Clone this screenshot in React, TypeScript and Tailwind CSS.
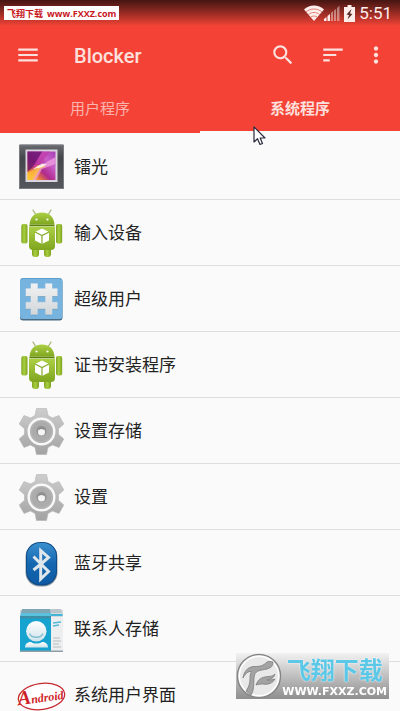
import React from 'react';
import { MdMenu, MdMoreVert, MdSearch, MdSort } from 'react-icons/md';

const GalleryIcon: React.FC = () => (
  <svg viewBox="0 0 48 48" className="w-12 h-12">
    <defs>
      <linearGradient id="frame" x1="0" y1="0" x2="0" y2="1">
        <stop offset="0" stopColor="#6b6c72" />
        <stop offset="0.3" stopColor="#44464c" />
        <stop offset="1" stopColor="#55575c" />
      </linearGradient>
      <linearGradient id="photo" x1="0" y1="1" x2="1" y2="0">
        <stop offset="0" stopColor="#ffd21f" />
        <stop offset="0.2" stopColor="#f58a2c" />
        <stop offset="0.42" stopColor="#b02a8c" />
        <stop offset="0.7" stopColor="#c95fcb" />
        <stop offset="1" stopColor="#a63fb5" />
      </linearGradient>
    </defs>
    <rect x="1" y="1.5" width="45" height="44.5" rx="1" fill="url(#frame)" />
    <rect x="1.5" y="2" width="44" height="43.5" rx="1" fill="none" stroke="#85868b" strokeWidth="0.8" />
    <rect x="7.5" y="6.5" width="32" height="32.5" fill="#d9d4de" />
    <rect x="9.5" y="8.5" width="28" height="28.5" fill="url(#photo)" />
    <path d="M9.5 8.5h15L14 25l-4.5 4z" fill="#6a1570" opacity="0.85" />
    <path d="M37.5 14 20 24l-7 13h5l6-11 13.5-5z" fill="#f3a6e4" opacity="0.7" />
    <path d="M24 8.5h8L20 24l-8 6z" fill="#c13aa8" opacity="0.7" />
    <path d="M9.5 31 20 22l8 1-6 3-7 11H9.5z" fill="#ffc53a" opacity="0.75" />
    <path d="M15 26 24 20.5l5 1-6 3z" fill="#fff" opacity="0.8" />
  </svg>
);

const AndroidIcon: React.FC = () => (
  <svg viewBox="0 0 48 48" className="w-12 h-12">
    <defs>
      <linearGradient id="droid" x1="0" y1="0" x2="0" y2="1">
        <stop offset="0" stopColor="#acd045" />
        <stop offset="1" stopColor="#7fa51f" />
      </linearGradient>
      <linearGradient id="droidSide" x1="0" y1="0" x2="1" y2="0">
        <stop offset="0" stopColor="#7da321" />
        <stop offset="0.45" stopColor="#a9cf3f" />
        <stop offset="1" stopColor="#7da321" />
      </linearGradient>
    </defs>
    <path d="M15 1l3 5M33 1l-3 5" stroke="#a3b87a" strokeWidth="1.3" strokeLinecap="round" />
    <rect x="14" y="34" width="7" height="14" rx="3" fill="url(#droidSide)" />
    <rect x="26" y="34" width="7" height="14" rx="3" fill="url(#droidSide)" />
    <rect x="3.3" y="15" width="6.2" height="19.5" rx="2" fill="url(#droidSide)" />
    <rect x="38" y="15" width="6.2" height="19.5" rx="2" fill="url(#droidSide)" />
    <path d="M11 17.500h26V37a4 4 0 0 1-4 4H15a4 4 0 0 1-4-4z" fill="url(#droid)" />
    <path d="M11.500 15.800C12 7.500 17 3.500 24 3.500s12 4 12.500 12.300z" fill="url(#droid)" />
    <path d="M11.500 16.500h25" stroke="#5d7d15" strokeWidth="1.3" />
    <circle cx="18.5" cy="10.5" r="1.1" fill="#fff" />
    <circle cx="29.5" cy="10.5" r="1.1" fill="#fff" />
    <path d="M24 19.500l7 3.500v8.500l-7 3.500-7-3.500V23z" fill="#fff" />
    <path d="M17 23l7 3.500 7-3.500M24 26.500V35" fill="none" stroke="#86ab28" strokeWidth="1.2" />
  </svg>
);

const hashPath =
  'M13 8.700h6.500v5h8v-5H34v5h5.300V21H34v6.300h5.300v6.500H34v5.700h-6.500v-5.700h-8v5.700H13v-5.700H8v-6.500h5V21H8v-7.300h5zM19.500 21v6.300h8V21z';

const SuperuserIcon: React.FC = () => (
  <svg viewBox="0 0 48 48" className="w-12 h-12">
    <defs>
      <linearGradient id="hash" x1="0" y1="0" x2="0" y2="1">
        <stop offset="0" stopColor="#f0f1f2" />
        <stop offset="1" stopColor="#d3d7da" />
      </linearGradient>
    </defs>
    <rect x="2" y="4" width="42.5" height="41.5" rx="3" fill="#4a6a80" />
    <rect x="2" y="3" width="42.5" height="41" rx="3" fill="#76b3df" />
    <path d="M3 5a2 2 0 0 1 2-1.500h36.500a2 2 0 0 1 2 1.500" fill="none" stroke="#5d9fce" />
    <path d={hashPath} fill="#5c8eb2" fillRule="evenodd" transform="translate(0 0.800)" />
    <path
      d={hashPath}
      fill="url(#hash)"
      fillRule="evenodd"
      stroke="url(#hash)"
      strokeWidth="0.5"
      strokeLinejoin="round"
    />
  </svg>
);

const GearIcon: React.FC = () => (
  <svg viewBox="0 0 48 48" className="w-12 h-12">
    <defs>
      <linearGradient id="gear" x1="0" y1="0" x2="0" y2="1">
        <stop offset="0" stopColor="#cdcdcd" />
        <stop offset="1" stopColor="#a3a3a3" />
      </linearGradient>
    </defs>
    <path
      d="M18.500 1.500h10l1.500 7 4.500 2.500 6.500-2.500 4.800 8.500-5.300 4.700v5.600l5.300 4.700-4.800 8.500-6.500-2.500-4.500 2.500-1.500 7h-10l-1.500-7-4.500-2.500L6 40.500 1.200 32l5.300-4.700v-5.600L1.200 17 6 8.500l6.500 2.500L17 8.500z"
      fill="url(#gear)"
      stroke="#b4b4b4"
      strokeWidth="0.6"
      strokeLinejoin="round"
    />
    <circle cx="23.5" cy="24.5" r="12.8" fill="#b4b4b4" stroke="#f8f8f8" strokeWidth="2.4" />
    <circle cx="23.5" cy="24.5" r="10" fill="#acacac" />
    <circle cx="23.5" cy="24" r="5.2" fill="#949494" />
    <circle cx="23.5" cy="25" r="3.5" fill="#f5f5f5" />
    <path d="M21 22.500c1-1.500 4-1.500 5 0" fill="none" stroke="#888" strokeWidth="1.2" />
  </svg>
);

const BluetoothIcon: React.FC = () => (
  <svg viewBox="0 0 48 48" className="w-12 h-12">
    <defs>
      <linearGradient id="bt" x1="0" y1="0" x2="0" y2="1">
        <stop offset="0" stopColor="#3a8fce" />
        <stop offset="0.5" stopColor="#1567b0" />
        <stop offset="1" stopColor="#0d5ba4" />
      </linearGradient>
    </defs>
    <rect x="7.5" y="4" width="32" height="43.5" rx="14" fill="#8d99a3" />
    <rect x="8" y="3" width="31" height="43.5" rx="14" fill="#0f4d88" />
    <rect x="9" y="4" width="29" height="41" rx="13" fill="url(#bt)" />
    <path
      d="M15.500 17.500 23 25l7.500 7.500-7.800 7.500V11.500l7.800 7L23 25l-7.500 6"
      fill="none"
      stroke="#dfe6ec"
      strokeWidth="3"
    />
  </svg>
);

const ContactsIcon: React.FC = () => (
  <svg viewBox="0 0 48 48" className="w-12 h-12">
    <defs>
      <linearGradient id="person" x1="0" y1="0" x2="0" y2="1">
        <stop offset="0" stopColor="#ffffff" />
        <stop offset="1" stopColor="#cfe3ea" />
      </linearGradient>
    </defs>
    <rect x="2" y="5" width="43" height="42" fill="#d5dadc" />
    <path d="M4 4h28.500v4H3z" fill="#7fa6b4" />
    <path d="M3 8h30v3H2z" fill="#5bc0dd" />
    <path d="M2 11h31v3H2z" fill="#3e8ea8" />
    <path d="M33 4h10l1 4H33z" fill="#b9c7cc" />
    <path d="M33 9h11.500v2H33z" fill="#42b5d8" />
    <path d="M33 12h12v34.500H33z" fill="#eceeef" />
    <path d="M2 13.500h31V47H2z" fill="#17a3cf" />
    <path d="M2 45.500h43V47H2z" fill="#8da0a7" />
    <circle cx="18.3" cy="26.3" r="10.2" fill="url(#person)" />
    <path d="M11.500 28.500c2 5 11.500 5 13.500 0" fill="none" stroke="#83bfd3" strokeWidth="1.4" />
    <path d="M7 42.500c0-4 3-5.500 6-5.500 3 2 8 2 11 0 3 0 6 1.500 6 5.500z" fill="url(#person)" />
    <path d="M35 18l8-1M35 21l6-1" stroke="#55b8d8" strokeWidth="1.5" />
    <path d="M35 33h7M35 36h8M35 39h6M35 42h8" stroke="#b9bec0" strokeWidth="1.2" />
  </svg>
);

const KitKatIcon: React.FC = () => (
  <svg viewBox="0 0 48 48" className="w-12 h-12 overflow-visible">
    <g transform="rotate(-8 23.500 25.500)">
      <ellipse cx="23.5" cy="25.5" rx="23.3" ry="13" fill="#fff" stroke="#c62a30" strokeWidth="1.3" />
      <text
        x="22.5"
        y="31"
        textAnchor="middle"
        fill="#cf1f26"
        className="font-['Liberation_Serif',serif] font-bold italic text-[12px]"
      >
        <tspan className="text-[20px]">A</tspan>ndroid
      </text>
    </g>
  </svg>
);

const apps = [
  { name: '镭光', Icon: GalleryIcon },
  { name: '输入设备', Icon: AndroidIcon },
  { name: '超级用户', Icon: SuperuserIcon },
  { name: '证书安装程序', Icon: AndroidIcon },
  { name: '设置存储', Icon: GearIcon },
  { name: '设置', Icon: GearIcon },
  { name: '蓝牙共享', Icon: BluetoothIcon },
  { name: '联系人存储', Icon: ContactsIcon },
  { name: '系统用户界面', Icon: KitKatIcon },
];

const StatusBar: React.FC = () => (
  <div className="flex h-[26px] items-center justify-between bg-gradient-to-b from-[#451512] to-[#f44336] pl-1 pr-2">
    <div className="flex h-[14px] items-center gap-1 bg-white px-[3px] font-['Open_Sans','Noto_Sans_CJK_SC',sans-serif] text-[9px] font-bold leading-none text-[#c8161d]">
      <span>飞翔下载</span>
      <span>www.FXXZ.com</span>
    </div>
    <div className="flex items-center text-[#fdeeec]">
      <svg viewBox="0 0 20 16" className="h-4 w-5" fill="currentColor">
        <path d="M10 16 0 4.500C5.500-.8 14.500-.8 20 4.500z" />
        <path
          d="M2 7c4.500-4 11.500-4 16 0M4.300 9.600c3.200-2.800 8.200-2.800 11.400 0M6.600 12.200c2-1.600 4.800-1.600 6.800 0"
          fill="none"
          stroke="#e0655b"
          strokeWidth="0.8"
        />
      </svg>
      <svg viewBox="0 0 16 16" className="h-4 w-4" fill="currentColor">
        <path d="M0 16v-2l2.500-2v4zM3.500 16v-5l2.500-2v7z" />
        <path d="M7 16V8l2-2v10zM10 16V5.500L12 4v12zM13 16V3l2.500-2.500V16z" opacity="0.45" />
      </svg>
      <svg viewBox="0 0 11 17" className="ml-1 h-[17px] w-[11px]">
        <path d="M3.500 0h4v2H11v15H0V2h3.500z" fill="#fdeeec" />
        <path d="M7.500 4 2.500 9.500l2.500.5-1.500 4.500L8.500 9 6 8.500z" fill="#5f2b26" />
      </svg>
      <span className="ml-1 font-['Roboto',sans-serif] text-[17px] leading-none">5:51</span>
    </div>
  </div>
);

const Watermark: React.FC = () => (
  <div className="fixed bottom-3 right-[11px] flex h-[46px] items-center bg-gradient-to-b from-[#f2f2f2] to-[#8f8f8f] pr-[2px]">
    <svg viewBox="0 0 46 46" className="h-[46px] w-[46px]">
      <circle cx="23" cy="23" r="21.5" fill="#e9e9e9" stroke="#868686" strokeWidth="1.5" />
      <circle cx="23" cy="23" r="19.7" fill="none" stroke="#fff" strokeWidth="1.5" />
      {/* Upper wing */}
      <path
        d="M7 25c1-7 5-11 11-11.500 6 0 9-.5 13-4.500 2-1 4-.5 6 0 0 4-2 6-6 7-6 1.500-11 1-12.500 6C17 28 19 36 15 42l-5-4c3-4 4-8 4-12 0-3 0-5 1.500-7.500C12 18 9 21 7 25z"
        fill="#a3a3a3"
        stroke="#7b7b7b"
        strokeWidth="0.8"
      />
      {/* Lower wing */}
      <path
        d="M39 21c-3 3-6 2-10 3-5 1-7 3-9 8 3-1 5-1 7-1 5 1 10-1 12-5-3 1-5 1-8 1 4-1 7-2 8-6z"
        fill="#a3a3a3"
        stroke="#7b7b7b"
        strokeWidth="0.8"
      />
    </svg>
    <div className="flex flex-col items-center font-bold">
      <span className="font-['Noto_Sans_CJK_SC',sans-serif] text-[24px] leading-[30px] text-[#5cc8e8] [text-shadow:0_0_2px_#fff]">
        飞翔下载
      </span>
      <span className="pt-px font-['DejaVu_Sans',sans-serif] text-[11px] leading-[14px] text-white">WWW.FXXZ.COM</span>
    </div>
  </div>
);

const App: React.FC = () => {
  return (
    <div className="relative h-screen overflow-hidden bg-[#fafafa] font-['Roboto','Noto_Sans_CJK_SC',sans-serif]">
      <header className="bg-[#f44336] text-[#fce0dd]">
        <StatusBar />

        {/* Toolbar */}
        <div className="flex h-[58px] items-center pr-[6px]">
          <button aria-label="Menu" className="flex w-14 justify-center">
            <MdMenu className="h-[26px] w-[26px]" />
          </button>
          <h1 className="ml-[18px] flex-1 pt-[2px] text-[20px] font-medium">Blocker</h1>
          <button aria-label="Search" className="flex w-[50px] justify-center">
            <MdSearch className="h-[26px] w-[26px]" />
          </button>
          <button aria-label="Sort" className="flex w-[50px] justify-center">
            <MdSort className="h-[26px] w-[26px]" />
          </button>
          <button aria-label="More" className="flex w-9 justify-center">
            <MdMoreVert className="h-[26px] w-[26px]" />
          </button>
        </div>

        {/* Tabs */}
        <nav className="flex h-[49px] text-[15px]">
          <button className="flex-1 pt-[2px] text-[#fab4ae]">用户程序</button>
          <button className="flex-1 border-b-2 border-[#fafafa] pt-1 font-bold">系统程序</button>
        </nav>
      </header>

      <ul className="pt-px">
        {apps.map(({ name, Icon }) => (
          <li
            key={name}
            className="flex h-[66px] items-center gap-2 border-b border-[#dedede] pl-[18px] text-[17px] text-[#222]"
          >
            <Icon />
            <span className="pt-[3px]">{name}</span>
          </li>
        ))}
      </ul>

      <Watermark />

      {/* Mouse pointer */}
      <svg viewBox="0 0 13 20" className="absolute left-[253px] top-[126px] h-5 w-[13px]">
        <path
          d="M1 1v15l3.500-3.300L7 18.500l2.500-1L7.200 12H12z"
          fill="#fff"
          stroke="#2b2b3f"
          strokeWidth="1.2"
          strokeLinejoin="round"
        />
      </svg>
    </div>
  );
};

export default App;
